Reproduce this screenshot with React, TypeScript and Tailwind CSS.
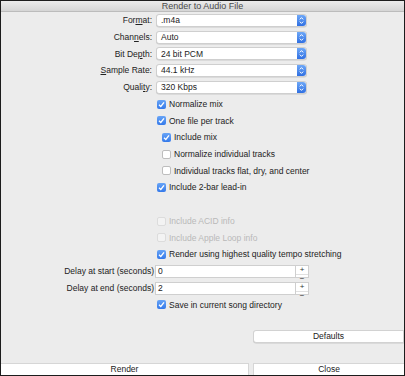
import React from 'react';

const font = { fontFamily: '"Liberation Sans", Arial, sans-serif' };

const Stepper = () => (
  <div className="flex h-full w-[9px] items-center justify-center rounded-r-[3px] bg-gradient-to-b from-[#6fa8f7] to-[#2f6fe2]">
    <svg width="5" height="9" viewBox="0 0 5 9" fill="none" stroke="white" strokeWidth="1">
      <path d="M0.8 3.4 L2.5 1.6 L4.2 3.4" />
      <path d="M0.8 5.6 L2.5 7.4 L4.2 5.6" />
    </svg>
  </div>
);

const SelectRow = ({ label, value }: { label: React.ReactNode; value: string }) => (
  <div className="flex h-[16.74px] items-center">
    <div className="w-[152px] pr-[1px] text-right text-[#222]">{label}</div>
    <div className="ml-[3px] flex h-[13px] w-[151px] rounded-[3px] border border-[#cfcfcf] bg-white shadow-[0_0.5px_0.5px_rgba(0,0,0,0.15)]">
      <div className="flex flex-1 items-center pl-[4px] text-[#222]">{value}</div>
      <Stepper />
    </div>
  </div>
);

const Check = ({ checked, disabled }: { checked?: boolean; disabled?: boolean }) =>
  checked ? (
    <div className="flex h-[9px] w-[9px] items-center justify-center rounded-[2px] bg-gradient-to-b from-[#68a4f6] to-[#3479ea]">
      <svg width="7" height="7" viewBox="0 0 7 7" fill="none" stroke="white" strokeWidth="1.3">
        <path d="M1 3.8 L2.8 5.5 L6 1.3" />
      </svg>
    </div>
  ) : (
    <div
      className={
        disabled
          ? 'h-[9px] w-[9px] rounded-[2px] border border-[#dcdcdc] bg-[#f3f3f3]'
          : 'h-[9px] w-[9px] rounded-[2px] border border-[#bdbdbd] bg-white'
      }
    />
  );

const CheckRow = ({
  label,
  checked,
  disabled,
  indent,
}: {
  label: string;
  checked?: boolean;
  disabled?: boolean;
  indent?: boolean;
}) => (
  <div className="flex h-[16.74px] items-center">
    <div className={indent ? 'w-[161px]' : 'w-[156px]'} />
    <Check checked={checked} disabled={disabled} />
    <span className={disabled ? 'ml-[3px] text-[#b9b9b9]' : 'ml-[3px] text-[#222]'}>{label}</span>
  </div>
);

const DelayRow = ({ label, value }: { label: string; value: string }) => (
  <div className="flex h-[16.74px] items-center">
    <div className="w-[153px] text-right text-[#222]">{label}</div>
    <div className="ml-[1px] flex h-[13px] w-[141px] items-center border border-[#cfcfcf] bg-white pl-[2px] text-[#222]">
      {value}
    </div>
    <div className="flex h-[13px] w-[13px] flex-col border border-l-0 border-[#cfcfcf] bg-white text-[#333]">
      <div className="flex flex-1 items-center justify-center border-b border-[#e0e0e0] text-[8px] leading-none">+</div>
      <div className="flex flex-1 items-center justify-center text-[8px] leading-none">−</div>
    </div>
  </div>
);

const U = ({ children }: { children: string }) => <span className="underline">{children}</span>;

export default function App() {
  return (
    <div
      style={font}
      className="flex h-[376px] w-[405px] flex-col border border-[#1c1c1c] bg-[#ececec] text-[8.5px] leading-none"
    >
      <div className="flex h-[11px] items-center justify-center border-b border-[#bcbcbc] bg-gradient-to-b from-[#ebebeb] to-[#d5d5d5] text-[9px] text-[#4a4a4a]">
        Render to Audio File
      </div>
      <div className="flex flex-col">
        <SelectRow label={<>For<U>m</U>at:</>} value=".m4a" />
        <SelectRow label={<>Chan<U>n</U>els:</>} value="Auto" />
        <SelectRow label={<>Bit De<U>p</U>th:</>} value="24 bit PCM" />
        <SelectRow label={<><U>S</U>ample Rate:</>} value="44.1 kHz" />
        <SelectRow label={<>Quali<U>t</U>y:</>} value="320 Kbps" />
        <CheckRow label="Normalize mix" checked />
        <CheckRow label="One file per track" checked />
        <CheckRow label="Include mix" checked indent />
        <CheckRow label="Normalize individual tracks" indent />
        <CheckRow label="Individual tracks flat, dry, and center" indent />
        <CheckRow label="Include 2-bar lead-in" checked />
        <div className="h-[16.74px]" />
        <CheckRow label="Include ACID info" disabled />
        <CheckRow label="Include Apple Loop info" disabled />
        <CheckRow label="Render using highest quality tempo stretching" checked />
        <DelayRow label="Delay at start (seconds)" value="0" />
        <DelayRow label="Delay at end (seconds)" value="2" />
        <CheckRow label="Save in current song directory" checked />
      </div>
      <div className="mt-[17px] flex justify-end">
        <button className="h-[13px] w-[151px] rounded-l-[3px] border border-[#d2d2d2] bg-white text-[#222] shadow-[0_0.5px_0.5px_rgba(0,0,0,0.15)]">
          Defaults
        </button>
      </div>
      <div className="mt-auto flex gap-[4px]">
        <button className="h-[12px] w-[248px] border-t border-r border-[#d6d6d6] bg-white text-[#222]">Render</button>
        <button className="h-[12px] flex-1 border-t border-l border-[#d6d6d6] bg-white text-[#222]">Close</button>
      </div>
    </div>
  );
}
